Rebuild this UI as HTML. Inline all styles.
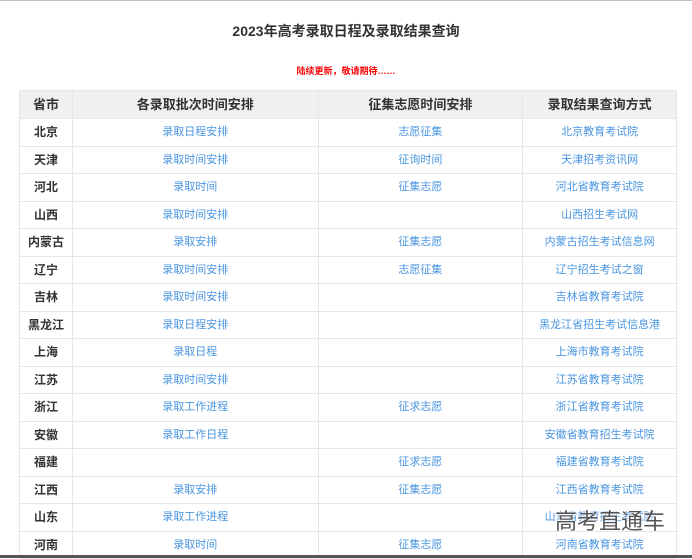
<!DOCTYPE html>
<html><head><meta charset="utf-8"><style>
body{margin:0;width:692px;height:558px;overflow:hidden;background:#fff;font-family:"Liberation Sans","Noto Sans CJK SC",sans-serif;position:relative}
.top{position:absolute;left:0;top:0;width:692px;height:1px;background:#b8c0c8}
h1{position:absolute;top:20px;left:0;width:692px;margin:0;text-align:center;font-size:14px;font-weight:bold;color:#333;line-height:22px}
.note{position:absolute;top:64px;left:0;width:692px;text-align:center;color:#f00;font-size:9px;font-weight:bold;line-height:14px}
table{position:absolute;left:19px;top:90px;border-collapse:collapse;width:658px;font-size:11px}
td,th{border:1px solid #e6e6e6;text-align:center;height:26.5px;padding:0;line-height:14px}
th{background:#f0f0f0;color:#333;font-size:13px;height:27px}
td:first-child{color:#333;font-weight:bold;font-size:12px}
td{color:#4a95e0}
.bot{position:absolute;left:0;top:555px;width:692px;height:3px;background:#555}
.wm{position:absolute;left:555px;top:504px;font-size:22px;color:#555;text-shadow:0 0 2px #fff,0 0 2px #fff}
</style></head><body>
<div class="top"></div>
<h1>2023年高考录取日程及录取结果查询</h1>
<div class="note">陆续更新，敬请期待……</div>
<table>
<colgroup><col style="width:53px"><col style="width:246px"><col style="width:205px"><col style="width:154px"></colgroup>
<tr><th>省市</th><th>各录取批次时间安排</th><th>征集志愿时间安排</th><th>录取结果查询方式</th></tr>
<tr><td>北京</td><td>录取日程安排</td><td>志愿征集</td><td>北京教育考试院</td></tr>
<tr><td>天津</td><td>录取时间安排</td><td>征询时间</td><td>天津招考资讯网</td></tr>
<tr><td>河北</td><td>录取时间</td><td>征集志愿</td><td>河北省教育考试院</td></tr>
<tr><td>山西</td><td>录取时间安排</td><td></td><td>山西招生考试网</td></tr>
<tr><td>内蒙古</td><td>录取安排</td><td>征集志愿</td><td>内蒙古招生考试信息网</td></tr>
<tr><td>辽宁</td><td>录取时间安排</td><td>志愿征集</td><td>辽宁招生考试之窗</td></tr>
<tr><td>吉林</td><td>录取时间安排</td><td></td><td>吉林省教育考试院</td></tr>
<tr><td>黑龙江</td><td>录取日程安排</td><td></td><td>黑龙江省招生考试信息港</td></tr>
<tr><td>上海</td><td>录取日程</td><td></td><td>上海市教育考试院</td></tr>
<tr><td>江苏</td><td>录取时间安排</td><td></td><td>江苏省教育考试院</td></tr>
<tr><td>浙江</td><td>录取工作进程</td><td>征求志愿</td><td>浙江省教育考试院</td></tr>
<tr><td>安徽</td><td>录取工作日程</td><td></td><td>安徽省教育招生考试院</td></tr>
<tr><td>福建</td><td></td><td>征求志愿</td><td>福建省教育考试院</td></tr>
<tr><td>江西</td><td>录取安排</td><td>征集志愿</td><td>江西省教育考试院</td></tr>
<tr><td>山东</td><td>录取工作进程</td><td></td><td>山东省教育招生考试院</td></tr>
<tr><td>河南</td><td>录取时间</td><td>征集志愿</td><td>河南省教育考试院</td></tr>
</table>
<div class="wm">高考直通车</div>
<div class="bot"></div>
</body></html>
